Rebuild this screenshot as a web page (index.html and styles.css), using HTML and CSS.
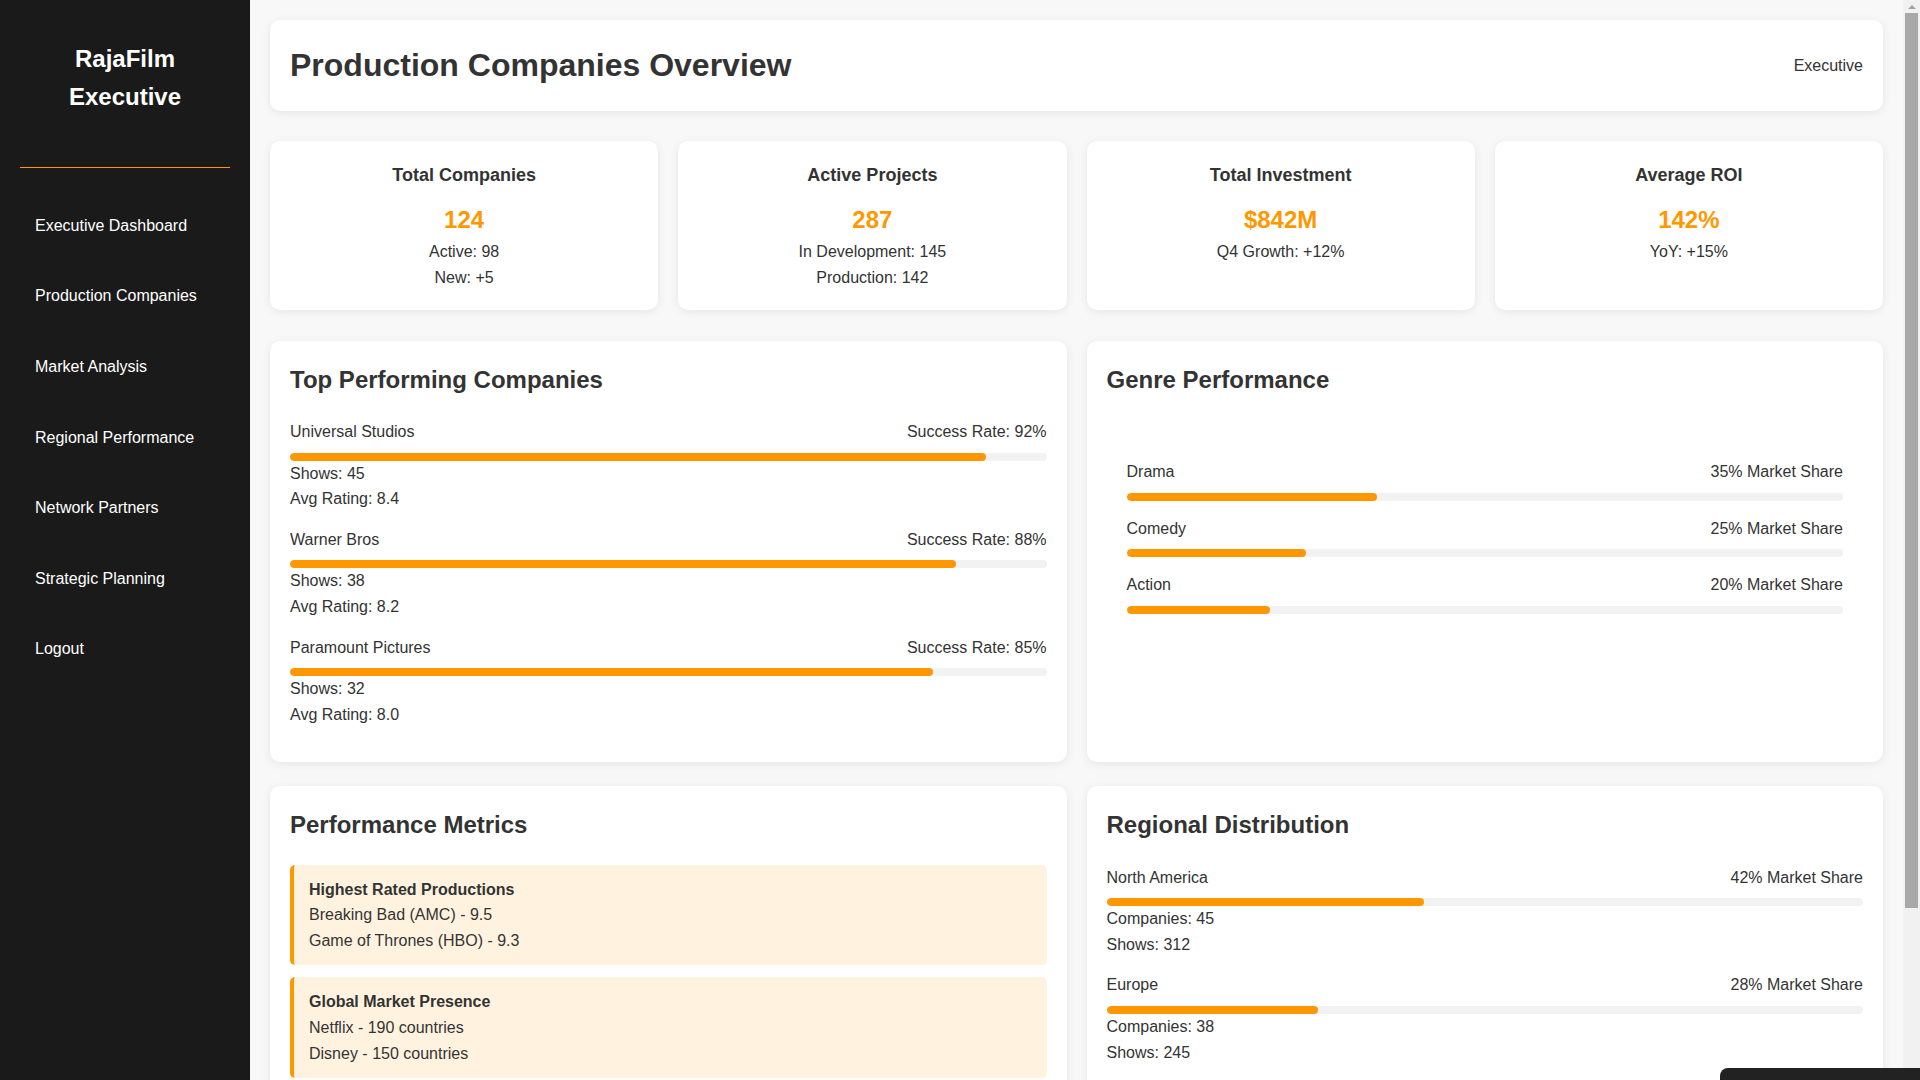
FILE: index.html
```html
<!DOCTYPE html>
<html lang="en">
<head>
<meta charset="UTF-8">
<title>RajaFilm Executive - Production Companies</title>
<link rel="stylesheet" href="styles.css">
</head>
<body>
<aside class="sidebar">
  <div class="logo"><h2>RajaFilm Executive</h2></div>
  <nav>
    <ul class="nav-list">
      <li><a class="nav-link" href="#">Executive Dashboard</a></li>
      <li><a class="nav-link" href="#">Production Companies</a></li>
      <li><a class="nav-link" href="#">Market Analysis</a></li>
      <li><a class="nav-link" href="#">Regional Performance</a></li>
      <li><a class="nav-link" href="#">Network Partners</a></li>
      <li><a class="nav-link" href="#">Strategic Planning</a></li>
      <li><a class="nav-link" href="#">Logout</a></li>
    </ul>
  </nav>
</aside>
<main class="main">
  <header class="top-header">
    <h1>Production Companies Overview</h1>
    <div class="user-info">Executive</div>
  </header>

  <section class="stats-grid">
    <div class="stat-card">
      <h3>Total Companies</h3>
      <div class="stat-value">124</div>
      <p>Active: 98</p>
      <p>New: +5</p>
    </div>
    <div class="stat-card">
      <h3>Active Projects</h3>
      <div class="stat-value">287</div>
      <p>In Development: 145</p>
      <p>Production: 142</p>
    </div>
    <div class="stat-card">
      <h3>Total Investment</h3>
      <div class="stat-value">$842M</div>
      <p>Q4 Growth: +12%</p>
    </div>
    <div class="stat-card">
      <h3>Average ROI</h3>
      <div class="stat-value">142%</div>
      <p>YoY: +15%</p>
    </div>
  </section>

  <section class="panel-grid">
    <div class="panel">
      <h2>Top Performing Companies</h2>
      <div class="item">
        <div class="item-row"><span>Universal Studios</span><span>Success Rate: 92%</span></div>
        <div class="bar"><div class="bar-fill" style="width:92%"></div></div>
        <p>Shows: 45</p>
        <p>Avg Rating: 8.4</p>
      </div>
      <div class="item">
        <div class="item-row"><span>Warner Bros</span><span>Success Rate: 88%</span></div>
        <div class="bar"><div class="bar-fill" style="width:88%"></div></div>
        <p>Shows: 38</p>
        <p>Avg Rating: 8.2</p>
      </div>
      <div class="item">
        <div class="item-row"><span>Paramount Pictures</span><span>Success Rate: 85%</span></div>
        <div class="bar"><div class="bar-fill" style="width:85%"></div></div>
        <p>Shows: 32</p>
        <p>Avg Rating: 8.0</p>
      </div>
    </div>

    <div class="panel">
      <h2>Genre Performance</h2>
      <div class="genre-chart">
        <div class="item">
          <div class="item-row"><span>Drama</span><span>35% Market Share</span></div>
          <div class="bar"><div class="bar-fill" style="width:35%"></div></div>
        </div>
        <div class="item">
          <div class="item-row"><span>Comedy</span><span>25% Market Share</span></div>
          <div class="bar"><div class="bar-fill" style="width:25%"></div></div>
        </div>
        <div class="item">
          <div class="item-row"><span>Action</span><span>20% Market Share</span></div>
          <div class="bar"><div class="bar-fill" style="width:20%"></div></div>
        </div>
      </div>
    </div>

    <div class="panel">
      <h2>Performance Metrics</h2>
      <div class="metric-box">
        <strong>Highest Rated Productions</strong>
        <div>Breaking Bad (AMC) - 9.5</div>
        <div>Game of Thrones (HBO) - 9.3</div>
      </div>
      <div class="metric-box">
        <strong>Global Market Presence</strong>
        <div>Netflix - 190 countries</div>
        <div>Disney - 150 countries</div>
      </div>
      <div class="metric-box">
        <strong>Award Recognition</strong>
        <div>HBO - 160 Emmy Awards</div>
        <div>Netflix - 112 Emmy Awards</div>
      </div>
    </div>

    <div class="panel">
      <h2>Regional Distribution</h2>
      <div class="item">
        <div class="item-row"><span>North America</span><span>42% Market Share</span></div>
        <div class="bar"><div class="bar-fill" style="width:42%"></div></div>
        <p>Companies: 45</p>
        <p>Shows: 312</p>
      </div>
      <div class="item">
        <div class="item-row"><span>Europe</span><span>28% Market Share</span></div>
        <div class="bar"><div class="bar-fill" style="width:28%"></div></div>
        <p>Companies: 38</p>
        <p>Shows: 245</p>
      </div>
      <div class="item">
        <div class="item-row"><span>Asia Pacific</span><span>22% Market Share</span></div>
        <div class="bar"><div class="bar-fill" style="width:22%"></div></div>
        <p>Companies: 31</p>
        <p>Shows: 198</p>
      </div>
    </div>
  </section>
</main>
<div class="scrollbar">
  <div class="scroll-arrow"></div>
  <div class="scroll-thumb"></div>
</div>
<div class="toast"></div>
</body>
</html>
```
FILE: styles.css
```css
* {
  box-sizing: border-box;
}

body {
  margin: 0;
  padding-right: 17px;
  font-family: "Liberation Sans", Arial, sans-serif;
  font-size: 16px;
  line-height: 1.6;
  color: #333;
  background: #f8f8f8;
  display: flex;
  align-items: flex-start;
}

.sidebar {
  width: 250px;
  flex-shrink: 0;
  height: 100vh;
  position: sticky;
  top: 0;
  background: #1a1a1a;
  color: #fff;
  padding: 20px;
}

.logo {
  text-align: center;
  padding-bottom: 30px;
  border-bottom: 1px solid #ff9800;
  margin-bottom: 30px;
}

.logo h2 {
  margin: 20px 0;
  font-size: 24px;
  font-weight: bold;
}

.nav-list {
  list-style: none;
  margin: 0;
  padding: 0;
}

.nav-list li {
  margin-bottom: 15px;
}

.nav-link {
  display: block;
  padding: 15px;
  color: #fff;
  text-decoration: none;
  border-radius: 5px;
}

.main {
  flex: 1;
  min-width: 0;
  padding: 20px;
}

.top-header {
  display: flex;
  justify-content: space-between;
  align-items: center;
  background: #fff;
  padding: 20px;
  border-radius: 10px;
  box-shadow: 0 2px 10px rgba(0, 0, 0, 0.08);
  margin-bottom: 30px;
}

.top-header h1 {
  margin: 0;
  font-size: 32px;
}

.stats-grid {
  display: grid;
  grid-template-columns: repeat(4, 1fr);
  gap: 20px;
  margin-bottom: 31px;
}

.stat-card {
  background: #fff;
  padding: 20px 20px 19px;
  border-radius: 10px;
  box-shadow: 0 2px 10px rgba(0, 0, 0, 0.08);
  text-align: center;
}

.stat-card h3 {
  margin: 0 0 11px;
  font-size: 18px;
}

.stat-value {
  font-size: 24px;
  font-weight: bold;
  color: #ff9800;
}

.stat-card p {
  margin: 0;
}

.panel-grid {
  display: grid;
  grid-template-columns: 1fr 1fr;
  gap: 24px 20px;
}

.panel {
  background: #fff;
  padding: 20px;
  border-radius: 10px;
  box-shadow: 0 2px 10px rgba(0, 0, 0, 0.08);
}

.panel h2 {
  margin: 0 0 20px;
  font-size: 24px;
}

.item {
  margin-bottom: 15px;
}

.item p {
  margin: 0;
}

.item-row {
  display: flex;
  justify-content: space-between;
}

.bar {
  height: 8px;
  margin-top: 8px;
  background: #f2f2f2;
  border-radius: 4px;
  overflow: hidden;
}

.bar-fill {
  height: 100%;
  background: #ff9800;
  border-radius: 4px;
}

.genre-chart {
  padding: 40px 20px 20px;
}

.metric-box {
  background: #fff3e0;
  border-left: 4px solid #ff9800;
  border-radius: 5px;
  padding: 12px 15px;
  margin-bottom: 12px;
}

.metric-box strong {
  display: block;
}

.scrollbar {
  position: fixed;
  top: 0;
  right: 0;
  width: 17px;
  height: 100vh;
  background: #f1f1f1;
  display: flex;
  flex-direction: column;
  align-items: center;
}

.scroll-arrow {
  width: 0;
  height: 0;
  margin-top: 5px;
  border-left: 4px solid transparent;
  border-right: 4px solid transparent;
  border-bottom: 4px solid #a3a3a3;
}

.scroll-thumb {
  width: 13px;
  height: 895px;
  margin-top: 4px;
  background: #a8a8a8;
}

.toast {
  position: fixed;
  right: 0;
  bottom: 0;
  width: 200px;
  height: 12px;
  background: #222;
  border-radius: 8px 0 0 0;
}
```
